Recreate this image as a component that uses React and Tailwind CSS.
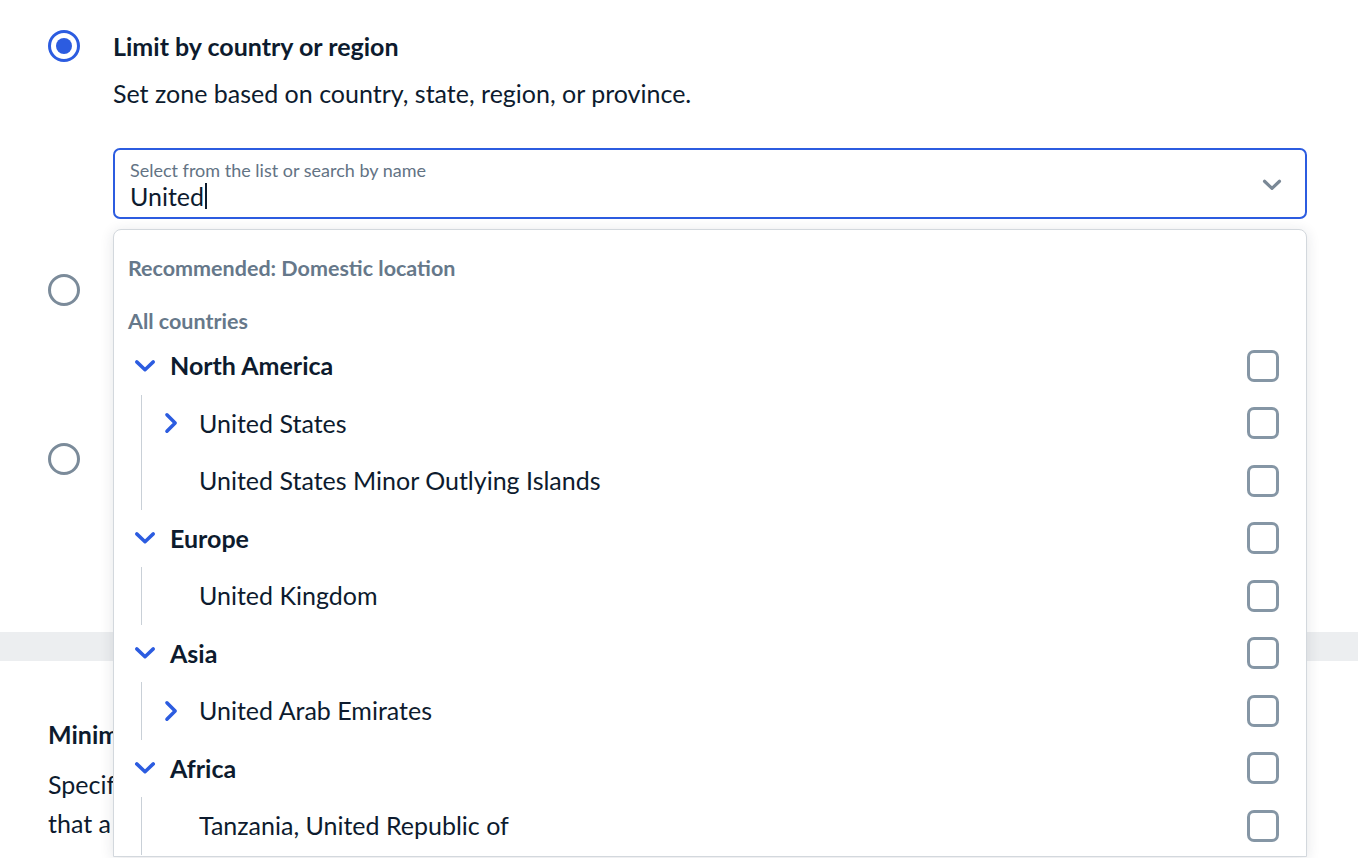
import { useState } from "react";

const groups = [
  { name: "North America", items: [{ label: "United States", more: true }, { label: "United States Minor Outlying Islands" }] },
  { name: "Europe", items: [{ label: "United Kingdom" }] },
  { name: "Asia", items: [{ label: "United Arab Emirates", more: true }] },
  { name: "Africa", items: [{ label: "Tanzania, United Republic of" }] },
];

function Radio({ checked }) {
  return checked ? (
    <span className="flex h-8 w-8 shrink-0 items-center justify-center rounded-full border-[3px] border-[#2c5ce0]">
      <span className="h-4 w-4 rounded-full bg-[#2c5ce0]" />
    </span>
  ) : (
    <span className="block h-8 w-8 shrink-0 rounded-full border-[3px] border-[#7b8b9a]" />
  );
}

function Checkbox() {
  return <span className="block h-8 w-8 shrink-0 rounded-[7px] border-[3px] border-[#8596a5]" />;
}

function ChevronDown({ className }) {
  return (
    <svg viewBox="0 0 24 24" className={className} fill="none" stroke="currentColor" strokeWidth="3.8" strokeLinecap="round" strokeLinejoin="round">
      <path d="M3 7.5l9 8.5 9-8.5" />
    </svg>
  );
}

function ChevronRight({ className }) {
  return (
    <svg viewBox="0 0 16 24" className={className} fill="none" stroke="currentColor" strokeWidth="3.8" strokeLinecap="round" strokeLinejoin="round">
      <path d="M3 3l9 9-9 9" />
    </svg>
  );
}

function Dropdown() {
  return (
    <div className="absolute left-[113px] top-[229px] h-[628px] w-[1194px] overflow-hidden rounded-t-[8px] border border-[#d3d8dd] bg-white shadow-[0_2px_14px_rgba(30,40,60,0.12)]">
      <div className="pt-[24px] pl-[14px] text-[21.5px] font-bold leading-[28px] text-[#66788a]">Recommended: Domestic location</div>
      <div className="mt-[25px] pl-[14px] text-[21.5px] font-bold leading-[28px] text-[#66788a]">All countries</div>
      <div className="mt-[2px]">
        {groups.map((g) => (
          <div key={g.name}>
            <div className="flex h-[57.5px] items-center pr-[27px]">
              <ChevronDown className="ml-[19px] h-[22px] w-[24px] text-[#2c5ce0]" />
              <span className="ml-[13px] flex-1 text-[25px] font-bold text-[#0d1b2e]">{g.name}</span>
              <Checkbox />
            </div>
            <div className="ml-[27px] border-l border-[#c9d0d7]">
              {g.items.map((it) => (
                <div key={it.label} className="flex h-[57.5px] items-center pr-[27px]">
                  <span className="flex w-[57px] shrink-0 pl-[22px]">
                    {it.more && <ChevronRight className="h-[22px] w-[15px] text-[#2c5ce0]" />}
                  </span>
                  <span className="flex-1 text-[25px] text-[#0d1b2e]">{it.label}</span>
                  <Checkbox />
                </div>
              ))}
            </div>
          </div>
        ))}
      </div>
    </div>
  );
}

export default function App() {
  const [value] = useState("United");
  return (
    <div className="relative h-[858px] w-[1358px] overflow-hidden bg-white font-['Lato',sans-serif] text-[#0d1b2e]">
      <div className="px-[48px] pt-[30px]">
        <div className="flex gap-[33px]">
          <Radio checked />
          <div className="flex-1">
            <div className="text-[25px] font-bold leading-[32px]">Limit by country or region</div>
            <div className="mt-[15px] text-[25px] leading-[32px]">Set zone based on country, state, region, or province.</div>
            <div className="mt-[39px] mr-[3px] flex h-[71px] items-center rounded-[7px] border-2 border-[#2c5ce0] bg-white pl-[15px] pr-[22px] pt-[2px]">
              <div className="flex-1">
                <div className="text-[18px] leading-[22px] text-[#637384]">Select from the list or search by name</div>
                <div className="flex items-center text-[25px] leading-[30px]">
                  {value}
                  <span className="ml-[1px] h-[26px] w-[2px] bg-[#0d1b2e]" />
                </div>
              </div>
              <ChevronDown className="h-[20px] w-[22px] text-[#7a8896]" />
            </div>
          </div>
        </div>
        <div className="mt-[55px] flex gap-[33px]">
          <Radio />
          <div className="flex-1" />
        </div>
        <div className="mt-[137px] flex gap-[33px]">
          <Radio />
          <div className="flex-1" />
        </div>
      </div>
      <div className="mt-[157px] h-[29px] bg-[#eceef0]" />
      <div className="px-[48px] pt-[57px]">
        <div className="text-[25px] font-bold leading-[32px]">Minimum order amount</div>
        <div className="mt-[15px] text-[25px] leading-[39px]">
          Specify the minimum order amount for this zone
          <br />
          that a customer needs to place an order.
        </div>
      </div>
      <Dropdown />
    </div>
  );
}
